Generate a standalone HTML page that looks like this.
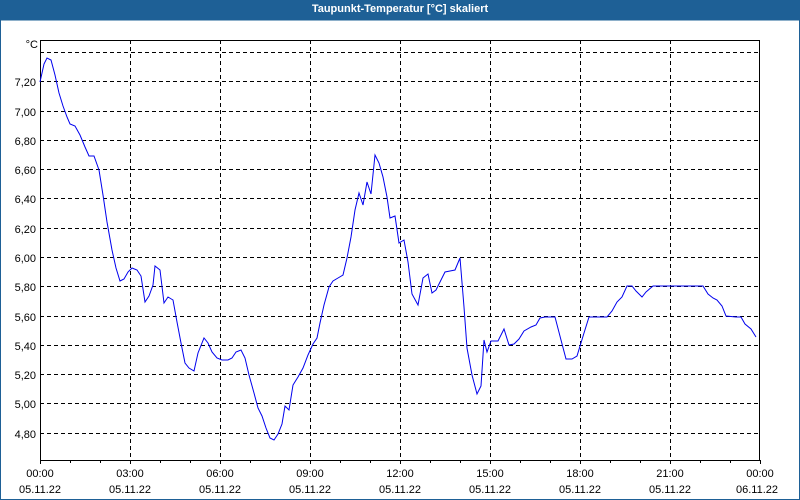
<!DOCTYPE html>
<html><head><meta charset="utf-8"><style>
html,body{margin:0;padding:0;background:#fff}
body{width:800px;height:500px;overflow:hidden;position:relative;font-family:"Liberation Sans","DejaVu Sans",sans-serif}
.t{position:absolute;left:0;top:0;width:800px;height:20px;background:#1e6096;color:#fff;font-weight:bold;font-size:11px;line-height:19px;text-align:center}
</style></head><body>
<div class="t">Taupunkt-Temperatur [°C] skaliert</div>
<svg width="800" height="500" style="position:absolute;left:0;top:0" xmlns="http://www.w3.org/2000/svg">
<rect x="0.5" y="20" width="799" height="479.5" fill="none" stroke="#1e6096" stroke-width="1"/>
<g stroke="#000" stroke-width="1" stroke-dasharray="4,3" shape-rendering="crispEdges">
<line x1="40" x2="760" y1="52.5" y2="52.5"/><line x1="40" x2="760" y1="81.5" y2="81.5"/><line x1="40" x2="760" y1="111.5" y2="111.5"/><line x1="40" x2="760" y1="140.5" y2="140.5"/><line x1="40" x2="760" y1="169.5" y2="169.5"/><line x1="40" x2="760" y1="198.5" y2="198.5"/><line x1="40" x2="760" y1="228.5" y2="228.5"/><line x1="40" x2="760" y1="257.5" y2="257.5"/><line x1="40" x2="760" y1="286.5" y2="286.5"/><line x1="40" x2="760" y1="316.5" y2="316.5"/><line x1="40" x2="760" y1="345.5" y2="345.5"/><line x1="40" x2="760" y1="374.5" y2="374.5"/><line x1="40" x2="760" y1="403.5" y2="403.5"/><line x1="40" x2="760" y1="433.5" y2="433.5"/>
<line x1="130.5" x2="130.5" y1="40" y2="460"/><line x1="220.5" x2="220.5" y1="40" y2="460"/><line x1="310.5" x2="310.5" y1="40" y2="460"/><line x1="400.5" x2="400.5" y1="40" y2="460"/><line x1="490.5" x2="490.5" y1="40" y2="460"/><line x1="580.5" x2="580.5" y1="40" y2="460"/><line x1="670.5" x2="670.5" y1="40" y2="460"/>
</g>
<g stroke="#000" stroke-width="1" shape-rendering="crispEdges" fill="none">
<rect x="40.5" y="40.5" width="719" height="420"/>
<path d="M40.5 460v4M70.5 460v3M100.5 460v3M130.5 460v4M160.5 460v3M190.5 460v3M220.5 460v4M250.5 460v3M280.5 460v3M310.5 460v4M340.5 460v3M370.5 460v3M400.5 460v4M430.5 460v3M460.5 460v3M490.5 460v4M520.5 460v3M550.5 460v3M580.5 460v4M610.5 460v3M640.5 460v3M670.5 460v4M700.5 460v3M730.5 460v3M760.5 460v4"/>
</g>
<polyline fill="none" stroke="#0000ee" stroke-width="1" points="40,82 44,64 47,58 51,60 55,75 59,93 63,106 67,117 70,124 75,126 80,135 85,147 89,156 94,156 99,170 103,195 107,222 112,250 116,268 120,281 124,279 128,272 132,268 137,270 141,276 145,302 149,296 153,285 155,266 160,270 164,303 168,297 173,300 177,322 181,343 185,363 189,368 194,371 198,353 204,338 208,343 212,352 217,358 222,360 228,360 232,358 236,352 241,350 245,358 249,375 254,393 258,408 262,416 266,428 270,438 274,440 278,434 282,424 285,406 289,410 293,385 298,377 303,368 308,355 313,344 317,338 320,323 324,305 329,287 333,281 338,278 343,275 347,258 351,237 355,210 359,193 363,205 367,182 371,194 375,155 379,163 383,177 387,197 390,218 395,216 399,243 404,240 408,262 412,294 418,305 423,278 428,274 432,293 436,290 440,282 445,272 450,271 455,270 460,258 464,307 467,348 472,375 477,394 481,386 484,340 487,352 491,341 498,341 504,329 509,345 514,344 519,339 524,331 531,327 536,325 540,318 545,317 555,317 561,340 566,359 572,359 577,356 584,333 589,317 598,317 607,317 612,311 617,302 622,297 627,286 632,286 636,291 642,297 646,292 653,286 663,286 703,286 708,294 713,298 717,300 722,306 726,316 736,317 741,317 745,324 751,329 756,337"/>
<g font-family="Liberation Sans, sans-serif" font-size="11" fill="#000" text-anchor="end">
<text x="38" y="48">°C</text>
<text x="36" y="86">7,20</text><text x="36" y="116">7,00</text><text x="36" y="145">6,80</text><text x="36" y="174">6,60</text><text x="36" y="203">6,40</text><text x="36" y="233">6,20</text><text x="36" y="262">6,00</text><text x="36" y="291">5,80</text><text x="36" y="321">5,60</text><text x="36" y="350">5,40</text><text x="36" y="379">5,20</text><text x="36" y="408">5,00</text><text x="36" y="438">4,80</text>
</g>
<g font-family="Liberation Sans, sans-serif" font-size="11" fill="#000" text-anchor="middle">
<text x="40" y="477">00:00</text><text x="130" y="477">03:00</text><text x="220" y="477">06:00</text><text x="310" y="477">09:00</text><text x="400" y="477">12:00</text><text x="490" y="477">15:00</text><text x="580" y="477">18:00</text><text x="670" y="477">21:00</text><text x="760" y="477">00:00</text>
<text x="40" y="493">05.11.22</text><text x="130" y="493">05.11.22</text><text x="220" y="493">05.11.22</text><text x="310" y="493">05.11.22</text><text x="400" y="493">05.11.22</text><text x="490" y="493">05.11.22</text><text x="580" y="493">05.11.22</text><text x="670" y="493">05.11.22</text><text x="757" y="493">06.11.22</text>
</g>
</svg>
</body></html>
